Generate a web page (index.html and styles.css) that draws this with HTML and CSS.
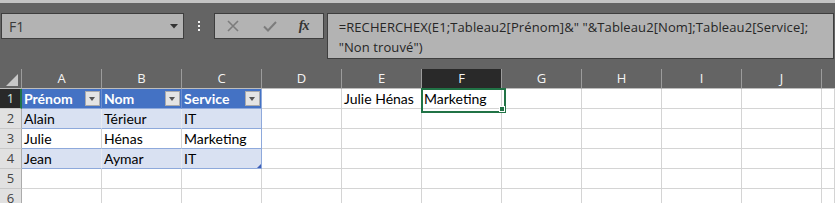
FILE: index.html
```html
<!DOCTYPE html>
<html lang="fr">
<head>
<meta charset="utf-8">
<title>RECHERCHEX</title>
<link rel="stylesheet" href="styles.css">
</head>
<body>
<div class="top-strip"></div>
<div class="formula-bar">
  <div class="namebox">
    <span class="namebox-text">F1</span>
    <svg class="dd" width="8" height="5" viewBox="0 0 8 5"><path d="M0 0H8L4 4.5Z" fill="#333"/></svg>
  </div>
  <div class="dots"><span></span><span></span><span></span></div>
  <div class="fbuttons">
    <svg class="fb-x" width="12" height="12" viewBox="0 0 12 12"><path d="M1 1L11 11M11 1L1 11" stroke="#7c7c7c" stroke-width="1.6"/></svg>
    <svg class="fb-ok" width="14" height="11" viewBox="0 0 14 11"><path d="M1 5.5L5 9.5L13 1" stroke="#7c7c7c" stroke-width="2" fill="none"/></svg>
    <span class="fx">fx</span>
  </div>
  <div class="formula">=RECHERCHEX(E1;Tableau2[Prénom]&amp;" "&amp;Tableau2[Nom];Tableau2[Service];<br>"Non trouvé")</div>
</div>

<div class="sheet">
  <div class="corner"><span class="tri"></span></div>
  <div class="ch">A</div><div class="ch">B</div><div class="ch">C</div><div class="ch">D</div><div class="ch">E</div>
  <div class="ch ch-sel">F</div><div class="ch">G</div><div class="ch">H</div><div class="ch">I</div><div class="ch">J</div><div class="ch ch-last"></div>

  <div class="rh rh-sel">1</div>
  <div class="c th"><span>Prénom</span><span class="filter"></span></div>
  <div class="c th"><span>Nom</span><span class="filter"></span></div>
  <div class="c th th-end"><span>Service</span><span class="filter"></span></div>
  <div class="c"></div>
  <div class="c">Julie Hénas</div>
  <div class="c sel">Marketing<span class="handle"></span></div>
  <div class="c"></div><div class="c"></div><div class="c"></div><div class="c"></div><div class="c"></div>

  <div class="rh">2</div>
  <div class="c band">Alain</div><div class="c band">Térieur</div><div class="c band t-end">IT</div>
  <div class="c"></div><div class="c"></div><div class="c"></div><div class="c"></div><div class="c"></div><div class="c"></div><div class="c"></div><div class="c"></div>

  <div class="rh">3</div>
  <div class="c tw">Julie</div><div class="c tw">Hénas</div><div class="c tw t-end">Marketing</div>
  <div class="c"></div><div class="c"></div><div class="c"></div><div class="c"></div><div class="c"></div><div class="c"></div><div class="c"></div><div class="c"></div>

  <div class="rh">4</div>
  <div class="c band">Jean</div><div class="c band">Aymar</div><div class="c band t-end t-last">IT<span class="resize"></span></div>
  <div class="c"></div><div class="c"></div><div class="c"></div><div class="c"></div><div class="c"></div><div class="c"></div><div class="c"></div><div class="c"></div>

  <div class="rh">5</div>
  <div class="c"></div><div class="c"></div><div class="c"></div><div class="c"></div><div class="c"></div><div class="c"></div><div class="c"></div><div class="c"></div><div class="c"></div><div class="c"></div><div class="c"></div>

  <div class="rh">6</div>
  <div class="c"></div><div class="c"></div><div class="c"></div><div class="c"></div><div class="c"></div><div class="c"></div><div class="c"></div><div class="c"></div><div class="c"></div><div class="c"></div><div class="c"></div>
</div>
</body>
</html>
```

FILE: styles.css
```css
* { box-sizing: border-box; }
html, body {
  margin: 0;
  padding: 0;
  background: #646464;
  overflow: hidden;
}
body {
  width: 835px;
  height: 203px;
  font-family: Lato, "Liberation Sans", sans-serif;
}

.top-strip {
  height: 3px;
  background: #c4c4c4;
}

.formula-bar {
  display: flex;
  align-items: flex-start;
  padding: 10px 1px 0 1px;
  height: 66px;
}

.namebox {
  width: 183px;
  height: 26px;
  background: #b3b3b3;
  border: 1px solid #3e3e3e;
  display: flex;
  align-items: center;
  justify-content: space-between;
  padding: 0 5px 0 7px;
}
.namebox-text {
  font-family: "Open Sans", sans-serif;
  font-size: 14px;
  color: #3a3a3a;
}
.dd { margin-top: 1px; }

.dots {
  width: 30px;
  height: 26px;
  display: flex;
  flex-direction: column;
  align-items: center;
  justify-content: center;
  gap: 2px;
}
.dots span {
  width: 2px;
  height: 2px;
  background: #f2f2f2;
}

.fbuttons {
  width: 110px;
  height: 26px;
  background: #b3b3b3;
  border: 1px solid #3e3e3e;
  margin-right: 3px;
  display: flex;
  align-items: center;
  padding-left: 12px;
}
.fb-x { margin-right: 24px; }
.fb-ok { margin-right: 22px; }
.fx {
  font-family: "Liberation Serif", serif;
  font-style: italic;
  font-weight: bold;
  font-size: 14px;
  color: #333;
  letter-spacing: -1px;
}

.formula {
  width: 508px;
  height: 46px;
  background: #b3b3b3;
  border: 1px solid #3e3e3e;
  padding: 3px 0 0 11px;
  font-family: "Open Sans", sans-serif;
  font-size: 13px;
  letter-spacing: 0.1px;
  line-height: 20px;
  color: #262626;
  white-space: nowrap;
  overflow: hidden;
}

.sheet {
  display: grid;
  grid-template-columns: 22px repeat(10, 80px) 1fr;
  grid-auto-rows: 20px;
  font-size: 14px;
}

.corner {
  background: #646464;
  border-right: 1px solid #9c9c9c;
  border-bottom: 1px solid #bdbdbd;
  position: relative;
}
.tri {
  position: absolute;
  left: 6px;
  top: 5px;
  width: 12px;
  height: 12px;
  background: #c8c8c8;
  clip-path: polygon(100% 0, 100% 100%, 0 100%);
}

.ch {
  background: #646464;
  color: #f4f4f4;
  font-family: "Open Sans", sans-serif;
  font-size: 13px;
  text-align: center;
  line-height: 19px;
  border-right: 1px solid #9c9c9c;
  border-bottom: 1px solid #bdbdbd;
}
.ch-sel {
  background: #292929;
  border-bottom-color: #217346;
}
.ch-last { border-right: none; }

.rh {
  background: #e1e1e1;
  color: #444;
  font-family: "Open Sans", sans-serif;
  font-size: 13px;
  text-align: center;
  line-height: 19px;
  border-right: 1px solid #ababab;
  border-bottom: 1px solid #c8c8c8;
}
.rh-sel {
  background: #292929;
  color: #d9ebe0;
  border-right: 2px solid #217346;
  padding-left: 1px;
}

.c {
  background: #fff;
  color: #000;
  line-height: 20px;
  padding: 0 2px;
  border-right: 1px solid #d4d4d4;
  border-bottom: 1px solid #d4d4d4;
  white-space: nowrap;
  position: relative;
}

.th {
  background: #4472c4;
  color: #fff;
  font-weight: bold;
  display: flex;
  align-items: center;
  justify-content: space-between;
  padding-right: 0;
  border-right-color: #6d8fd0;
  border-bottom-color: #8ea9db;
}
.th > span:first-child { line-height: 20px; }
.filter {
  width: 15px;
  height: 15px;
  margin-right: 1px;
  background: #e4e4e4;
  border: 1px solid #ababab;
  position: relative;
}
.filter::after {
  content: "";
  position: absolute;
  left: 3px;
  top: 5px;
  border-left: 3.5px solid transparent;
  border-right: 3.5px solid transparent;
  border-top: 4px solid #555;
}

.band {
  background: #d9e1f2;
  border-right-color: #e8ebf2;
  border-bottom-color: #8ea9db;
}
.tw {
  border-bottom-color: #8ea9db;
}
.t-end, .th-end {
  border-right-color: #8ea9db;
}

.resize {
  position: absolute;
  right: 0;
  bottom: 0;
  width: 4px;
  height: 4px;
  background: #3f5fb8;
  clip-path: polygon(100% 0, 100% 100%, 0 100%);
}

.sel { z-index: 2; }
.sel::before {
  content: "";
  position: absolute;
  left: -1px;
  top: -1px;
  width: 81px;
  height: 21px;
  border: 2px solid #217346;
}
.sel .handle {
  position: absolute;
  left: 77px;
  top: 17px;
  width: 6px;
  height: 6px;
  background: #217346;
  border: 1px solid #fff;
}
```
